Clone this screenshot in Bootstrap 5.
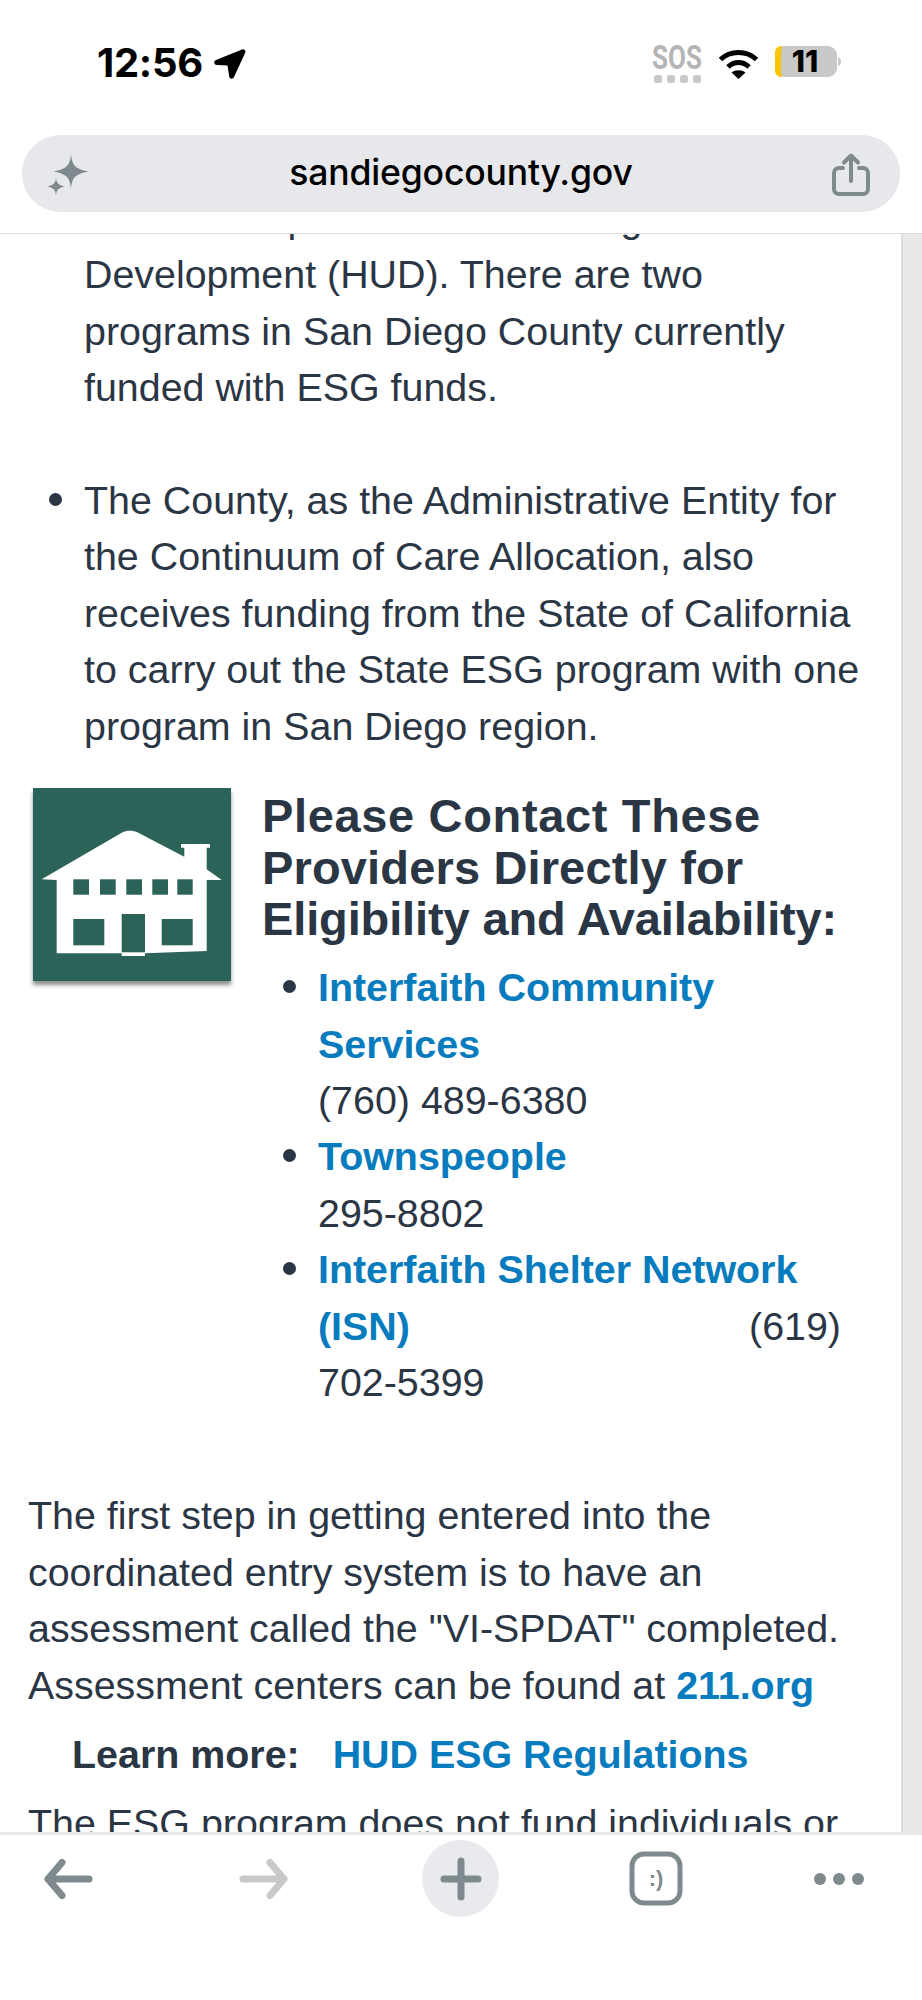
<!DOCTYPE html>
<html lang="en"><head><meta charset="utf-8">
<link href="https://cdn.jsdelivr.net/npm/bootstrap@5.3.0/dist/css/bootstrap.min.css" rel="stylesheet">
<style>
html,body{margin:0;background:#fff}
.shell{width:922px;height:2000px;overflow:hidden;background:#fff;font-family:"Liberation Sans",Arial,sans-serif;color:#2b3645}
.status-row{height:135px;padding:45px 81px 0 97px}
.clock{font:700 40px/34px Inter,sans-serif;color:#000;letter-spacing:-.3px;margin-top:1px}
.clock-arrow{margin:2px 0 0 3px}
.url-wrap{height:99px;padding:0 22px;border-bottom:1px solid #ddd}
.url-pill{height:77px;border-radius:38px;background:#e6e8eb;padding:0 30px 0 24px}
.url-text{font:500 35.6px/1.3 Inter,sans-serif;color:#000;letter-spacing:-.2px}
.view{height:1598px;overflow:hidden}
.page{width:901px;height:1598px;overflow:hidden;padding-left:28px}
.sbar{width:21px;background:#e9e9e9;border-left:2px solid #dcdcdc;height:1598px}
.copy{font-size:39.4px;line-height:56.4px;margin:0;white-space:nowrap}
.blist{margin:0;padding-left:56px;list-style:none}
.blist.cut{margin-top:-44px}
.blist li{position:relative}
.blist li::before{content:"";position:absolute;left:-35px;top:21px;width:13px;height:13px;border-radius:50%;background:#2b3645}
.gap1{margin-top:56.4px}
.sec{margin:34px 0 0 5px;gap:31px}
.logo{width:198px;height:193px;flex:none;box-shadow:0 4px 4px rgba(0,0,0,.45)}
.hd{font:700 47px/51.7px "Liberation Sans",sans-serif;color:#2b3645;margin:0;padding-top:2px}
.line-a{letter-spacing:.65px}
.line-b{letter-spacing:.15px}
.line-c{letter-spacing:-.13px}
.lnk{color:#067bbd;font-weight:700;text-decoration:none}
.tel{width:523px}
.blist.sub{margin-top:14px}
.para{margin-top:77px}
.more{margin:13px 0 0 44px;gap:33px;font-size:39.4px;line-height:56px;font-weight:700}
.para2{margin-top:13px}
.toolbar{height:168px;border-top:3px solid #e8e8e8;background:#fff;padding:5px 59px 0 42px;gap:131px}
.fwd{margin-left:13px}
.plus-bg{width:77px;height:77px;border-radius:50%;background:#e9eaee;margin-left:1px;margin-right:-1px}
.clr{flex:none}
.sos{margin-top:-10px}
.batt{margin-top:-5px}
</style></head>
<body>
<div class="shell">
  <div class="status-row d-flex justify-content-between align-items-start">
    <div class="d-flex align-items-start gap-2">
      <span class="clock">12:56</span>
      <svg class="clr clock-arrow" width="34" height="34" viewBox="0 0 34 34"><path d="M2 13 28 2.500c2.200-.8 4 1 3.200 3.200L20 30c-1 2.500-4.500 2.200-4.800-.5L13.500 18.500 3 18c-3.200-.2-3.700-3.800-1-5z" fill="#000"/></svg>
    </div>
    <div class="d-flex align-items-start">
      <svg class="clr sos" width="50" height="50" viewBox="0 -10 50 50"><text x="25" y="24" text-anchor="middle" font-family="Roboto,sans-serif" font-size="33" font-weight="700" textLength="50" lengthAdjust="spacingAndGlyphs" fill="#b5b5b5">SOS</text><g fill="#c9c9c9"><rect x="2" y="30" width="8" height="8" rx="2.500"/><rect x="15" y="30" width="8" height="8" rx="2.500"/><rect x="28" y="30" width="8" height="8" rx="2.500"/><rect x="41" y="30" width="8" height="8" rx="2.500"/></g></svg>
      <svg class="clr ms-3 mt-1" width="41" height="30" viewBox="0 0 41 30"><g fill="none" stroke="#000" stroke-width="5"><path d="M2.500 10.500C12 1 29 1 38.500 10.500"/><path d="M10 18c6-6 15-6 21 0"/></g><path d="M13.500 23.500c4-3 10-3 14 0l-7 6.500z" fill="#000"/></svg>
      <svg class="clr ms-3 batt" width="66" height="44" viewBox="0 -5 66 44"><rect x="0" y="1" width="62" height="31" rx="9" fill="#c9c9c9"/><path d="M7 1H6C2.500 1 0 4 0 8v17c0 4 2.500 7 6 7h1c-1-3-1-6-1-15S6 4 7 1z" fill="#fdc500"/><path d="M63 12c2 .5 3 2.500 3 4.500s-1 4-3 4.500z" fill="#c9c9c9"/><text x="30" y="27" text-anchor="middle" font-family="Inter,sans-serif" font-size="30" font-weight="800" fill="#000">11</text></svg>
    </div>
  </div>
  <div class="url-wrap">
    <div class="url-pill d-flex align-items-center justify-content-between">
      <svg width="44" height="72" viewBox="0 0 44 72" fill="#7f8a8e"><path d="M25 16C26 27 29 31 42.500 33.500 29 36 26 40 25 51 24 40 21 36 7.500 33.500 21 31 24 27 25 16z"/><path d="M10 39.500c.5 5.500 2 7.500 9 9-7 1.500-8.500 3.500-9 9-.5-5.500-2-7.500-9-9 7-1.500 8.500-3.500 9-9z"/></svg>
      <span class="url-text">sandiegocounty.gov</span>
      <svg width="38" height="70" viewBox="0 0 38 70" fill="none" stroke="#7f8a8e" stroke-width="4" stroke-linecap="round" stroke-linejoin="round"><path d="M11 29H7a5 5 0 0 0-5 5v16a5 5 0 0 0 5 5h24a5 5 0 0 0 5-5V34a5 5 0 0 0-5-5h-4"/><path d="M19 42V18M12 23.500l7-7 7 7"/></svg>
    </div>
  </div>
  <div class="view d-flex">
    <div class="page">
      <ul class="blist copy cut">
        <li>the U.S. Department of Housing and Urban<br>Development (HUD). There are two<br>programs in San Diego County currently<br>funded with ESG funds.</li>
        <li class="gap1">The County, as the Administrative Entity for<br>the Continuum of Care Allocation, also<br>receives funding from the State of California<br>to carry out the State ESG program with one<br>program in San Diego region.</li>
      </ul>
      <div class="sec d-flex align-items-start">
        <svg class="logo" viewBox="0 0 198 193"><rect width="198" height="193" fill="#2b6358"/><path d="M8.700 91.300 88.700 44.700c5.500-2.600 11-2.600 16.600 0l46 24V59.700H148V56h29v3.700h-3.300v21.600L188.700 92h-15v71L112 165.300V168H88.700v-2.700l-65 0V92z" fill="#fff"/><g fill="#2b6358"><rect x="40.300" y="91.300" width="15.700" height="15.400"/><rect x="67" y="91.300" width="15.700" height="15.400"/><rect x="93.300" y="91.300" width="15.700" height="15.400"/><rect x="119.300" y="91.300" width="15.700" height="15.400"/><rect x="144.300" y="91.300" width="15.400" height="15.400"/><rect x="40.300" y="131" width="31" height="26.300"/><rect x="88.700" y="126" width="23.300" height="38.300"/><rect x="128.700" y="131" width="31" height="26.300"/></g></svg>
        <div class="flex-grow-1">
          <h2 class="hd"><span class="line-a">Please Contact These</span><br><span class="line-b">Providers Directly for</span><br><span class="line-c">Eligibility and Availability:</span></h2>
          <ul class="copy blist sub">
            <li><a class="lnk" href="#">Interfaith Community<br>Services</a><br>(760) 489-6380</li>
            <li><a class="lnk" href="#">Townspeople</a><br>295-8802</li>
            <li class="tel"><a class="lnk" href="#">Interfaith Shelter Network</a><div class="d-flex justify-content-between"><a class="lnk" href="#">(ISN)</a><span>(619)</span></div>702-5399</li>
          </ul>
        </div>
      </div>
      <p class="copy para">The first step in getting entered into the<br>coordinated entry system is to have an<br>assessment called the "VI-SPDAT" completed.<br>Assessment centers can be found at <a class="lnk" href="#">211.org</a></p>
      <div class="more d-flex text-nowrap"><span>Learn more:</span><a class="lnk" href="#">HUD ESG Regulations</a></div>
      <p class="copy para2">The ESG program does not fund individuals or</p>
    </div>
    <div class="sbar"></div>
  </div>
  <div class="toolbar d-flex align-items-start">
    <svg class="clr" width="52" height="77" viewBox="0 0 52 77" fill="none" stroke="#7f8a8e" stroke-width="7" stroke-linecap="round" stroke-linejoin="round"><path d="M47 39H6M20 22.500 6 39l14 16.500"/></svg>
    <svg class="clr fwd" width="52" height="77" viewBox="0 0 52 77" fill="none" stroke="#c9c9c9" stroke-width="7" stroke-linecap="round" stroke-linejoin="round"><path d="M5 39h41M32 22.500 46 39 32 55.500"/></svg>
    <div class="plus-bg clr d-flex align-items-center justify-content-center"><svg width="42" height="44" viewBox="0 0 42 44" stroke="#7f8a8e" stroke-width="7" stroke-linecap="round"><path d="M21 4v36M4 22h34"/></svg></div>
    <svg class="clr" width="54" height="77" viewBox="0 0 54 77" fill="none"><rect x="3" y="14" width="48" height="49" rx="12" stroke="#7f8a8e" stroke-width="5"/><text x="27" y="46" text-anchor="middle" font-family="Liberation Sans,sans-serif" font-size="22" font-weight="700" fill="#7f8a8e">:)</text></svg>
    <svg class="clr" width="50" height="77" viewBox="0 0 50 77" fill="#7f8a8e"><circle cx="6" cy="39" r="6"/><circle cx="25" cy="39" r="6"/><circle cx="44" cy="39" r="6"/></svg>
  </div>
</div>
<script src="https://cdn.jsdelivr.net/npm/bootstrap@5.3.0/dist/js/bootstrap.bundle.min.js"></script>
</body></html>
